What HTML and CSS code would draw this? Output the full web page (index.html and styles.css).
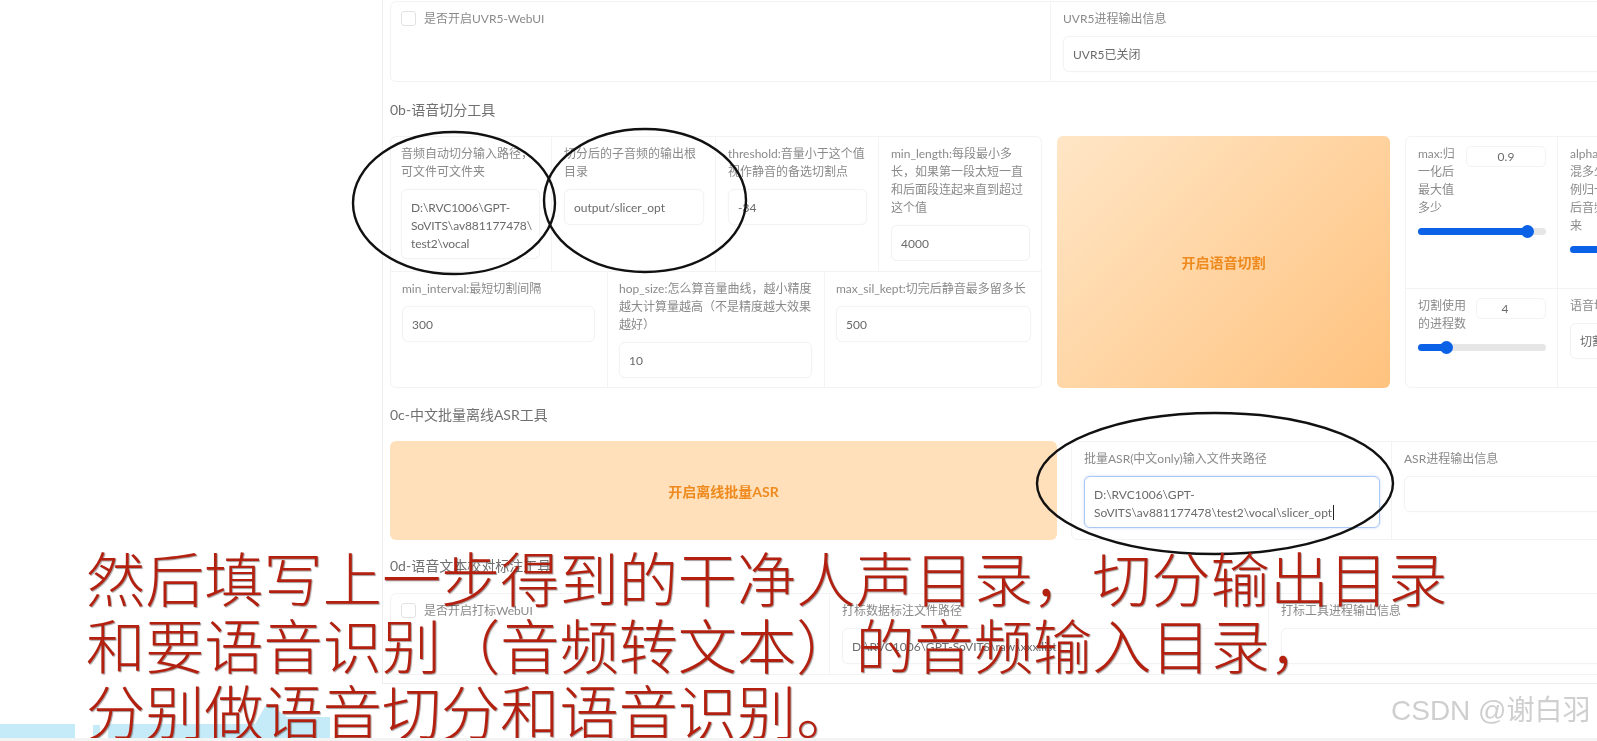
FILE: index.html
```html
<!DOCTYPE html>
<html lang="zh-CN">
<head>
<meta charset="utf-8">
<title>GPT-SoVITS WebUI</title>
<link rel="stylesheet" href="styles.css">
</head>
<body>
<div class="stage">
  <main class="panel">
    <section class="box row-a">
      <div class="cell w-660 check-cell"><span class="check"></span><span class="label">是否开启UVR5-WebUI</span></div>
      <div class="cell fill-cell"><div class="label gap">UVR5进程输出信息</div><div class="field">UVR5已关闭</div></div>
    </section>

    <h2 class="heading h-b">0b-语音切分工具</h2>
    <section class="row-b">
      <div class="box grid">
        <div class="grid-top">
          <div class="cell"><div class="label gap">音频自动切分输入路径，可文件可文件夹</div><div class="field multi tight">D:\RVC1006\GPT-SoVITS\av881177478\test2\vocal</div></div>
          <div class="cell"><div class="label gap">切分后的子音频的输出根目录</div><div class="field">output/slicer_opt</div></div>
          <div class="cell"><div class="label gap">threshold:音量小于这个值视作静音的备选切割点</div><div class="field">-34</div></div>
          <div class="cell"><div class="label gap">min_length:每段最小多长，如果第一段太短一直和后面段连起来直到超过这个值</div><div class="field">4000</div></div>
        </div>
        <div class="grid-bottom">
          <div class="cell"><div class="label gap">min_interval:最短切割间隔</div><div class="field">300</div></div>
          <div class="cell"><div class="label gap">hop_size:怎么算音量曲线，越小精度越大计算量越高（不是精度越大效果越好）</div><div class="field">10</div></div>
          <div class="cell"><div class="label gap">max_sil_kept:切完后静音最多留多长</div><div class="field">500</div></div>
        </div>
      </div>
      <button class="action action-big">开启语音切割</button>
      <div class="box side">
        <div class="side-row side-top">
          <div class="cell side-cell">
            <div class="slide-head"><div class="label">max:归<br>一化后<br>最大值<br>多少</div><div class="num num-wide">0.9</div></div>
            <div class="slider"><div class="slider-fill" style="width:86%"></div></div>
          </div>
          <div class="cell side-cell">
            <div class="slide-head"><div class="label">alpha_mix:<br>混多少比<br>例归一化<br>后音频进<br>来</div></div>
            <div class="slider"><div class="slider-fill" style="width:80%"></div></div>
          </div>
        </div>
        <div class="side-row side-bottom">
          <div class="cell side-cell">
            <div class="slide-head"><div class="label">切割使用<br>的进程数</div><div class="num num-narrow">4</div></div>
            <div class="slider"><div class="slider-fill" style="width:23%"></div></div>
          </div>
          <div class="cell side-cell">
            <div class="label nowrap">语音切割进程输出信息</div>
            <div class="field nowrap side-field">切割已完成</div>
          </div>
        </div>
      </div>
    </section>

    <h2 class="heading h-c">0c-中文批量离线ASR工具</h2>
    <section class="row-c">
      <button class="action action-wide">开启离线批量ASR</button>
      <div class="box asr">
        <div class="cell w-320"><div class="label gap">批量ASR(中文only)输入文件夹路径</div><div class="field multi focus">D:\RVC1006\GPT-SoVITS\av881177478\test2\vocal\slicer_opt<span class="caret"></span></div></div>
        <div class="cell fill-cell"><div class="label gap">ASR进程输出信息</div><div class="field empty"></div></div>
      </div>
    </section>

    <h2 class="heading h-d">0d-语音文本校对标注工具</h2>
    <section class="box row-d">
      <div class="cell w-441 check-cell"><span class="check"></span><span class="label">是否开启打标WebUI</span></div>
      <div class="cell w-439"><div class="label gap">打标数据标注文件路径</div><div class="field nowrap">D:\RVC1006\GPT-SoVITS\raw\xxx.list</div></div>
      <div class="cell fill-cell"><div class="label gap">打标工具进程输出信息</div><div class="field empty"></div></div>
    </section>
  </main>

  <svg class="blobs" viewBox="0 0 1597 741" aria-hidden="true">
    <path d="M0 724H75V738H0Z M93 725H100V738H93Z M108 724H255L267 703L287 717H330V738H108Z"/>
  </svg>
  <svg class="rings" viewBox="0 0 1597 741" aria-hidden="true">
    <ellipse cx="454" cy="203" rx="101" ry="71"/>
    <ellipse cx="645" cy="200.5" rx="101" ry="71.5"/>
    <ellipse cx="1215" cy="483.5" rx="178" ry="70.5"/>
  </svg>
  <div class="caption">然后填写上一步得到的干净人声目录，切分输出目录<br>和要语音识别（音频转文本）的音频输入目录，<br>分别做语音切分和语音识别。</div>
  <div class="mark">CSDN @谢白羽</div>
  <div class="band"></div>
</div>
</body>
</html>
```

FILE: styles.css
```css
* { box-sizing: border-box; }
html, body { margin: 0; padding: 0; background: #fff; }
body { width: 1597px; height: 741px; overflow: hidden; font-family: Lato, "Noto Sans CJK SC", "Noto Sans", sans-serif; }

.stage { position: relative; width: 1597px; height: 741px; overflow: hidden; background: #fff; filter: blur(.55px); }

.panel { margin-left: 382px; width: 1400px; height: 684px; padding: 1px 0 0 7px; border-left: 1px solid #ededed; border-bottom: 1px solid #ededed; }

.box { border: 1px solid #f3f3f3; border-radius: 6px; background: #fff; }
.cell { padding: 8px 11px 8px 12px; border-right: 1px solid #f3f3f3; min-width: 0; }
.fill-cell { flex: 1; border-right: 0; }
.w-660 { width: 660px; }
.w-441 { width: 439px; }
.w-439 { width: 439px; }
.w-320 { width: 320px; }

.label { font-size: 12px; line-height: 18px; color: #8a8a8a; }
.gap { margin-bottom: 8px; }
.nowrap { white-space: nowrap; }

.field { border: 1px solid #f3f3f3; border-radius: 6px; padding: 9px 9px 7px; min-height: 36px; font-size: 12px; line-height: 18px; color: #6a6a6a; background: #fff; box-shadow: 0 0 2px rgba(0,0,0,.03); overflow-wrap: anywhere; }
.multi { padding-bottom: 5px; }
.tight { padding-right: 3px; letter-spacing: -.1px; }
.empty { height: 36px; }
.focus { border-color: #a9c8f2; box-shadow: 0 0 3px rgba(90,150,240,.35); }
.caret { display: inline-block; width: 1px; height: 15px; margin-left: 1px; background: #222; vertical-align: -3px; }

.check-cell { display: flex; align-items: flex-start; gap: 8px; padding-left: 10px; }
.check { width: 15px; height: 15px; margin-top: 1px; border: 1px solid #e2e2e2; border-radius: 3px; background: #fff; flex: none; }

.heading { margin: 0; font-size: 14px; line-height: 20px; font-weight: 400; color: #707070; }
.h-b { margin-top: 18px; margin-bottom: 16px; }
.h-c { margin-top: 17px; margin-bottom: 16px; }
.h-d { margin-top: 16px; margin-bottom: 17px; }

.row-a { display: flex; height: 81px; }
.row-b { display: flex; gap: 15px; height: 252px; }
.row-c { display: flex; gap: 14px; height: 99px; }
.row-d { display: flex; height: 82px; }

.grid { width: 652px; flex: none; }
.grid-top { display: grid; grid-template-columns: 161px 164px 163px 162px; height: 134px; }
.grid-top .cell:first-child { padding-left: 10px; }
.grid-top .cell:last-child, .grid-bottom .cell:last-child { border-right: 0; }
.grid-bottom { display: grid; grid-template-columns: 217px 217px 216px; height: 116px; border-top: 1px solid #f3f3f3; }
.grid-bottom .cell { padding-left: 11px; padding-right: 12px; }
.grid-bottom .cell:last-child { padding-right: 10px; }

.action { border: 0; border-radius: 6px; font-family: inherit; font-size: 14px; font-weight: 700; color: #ee8a1e; padding: 0; flex: none; }
.action-big { width: 333px; background: linear-gradient(135deg, #ffe6c6, #ffc27e); }
.action-wide { width: 667px; background: #ffe0ba; }

.side { width: 315px; flex: none; display: flex; flex-direction: column; }
.side-row { display: grid; grid-template-columns: 152px 1fr; }
.side-top { height: 152px; border-bottom: 1px solid #f3f3f3; }
.side-bottom { flex: 1; }
.side-cell { padding: 8px 11px 8px 12px; }
.side-cell:last-child { border-right: 0; }
.slide-head { display: flex; justify-content: space-between; align-items: flex-start; }
.num { margin-top: 1px; height: 21px; border: 1px solid #f3f3f3; border-radius: 5px; font-size: 12px; line-height: 19px; color: #6a6a6a; text-align: center; }
.num-wide { width: 80px; }
.num-narrow { width: 70px; padding-right: 12px; }
.slider { position: relative; height: 7px; margin-top: 11px; border-radius: 4px; background: #e6e6e6; }
.slider-fill { position: relative; height: 100%; border-radius: 4px; background: #0b62e6; }
.slider-fill::after { content: ""; position: absolute; right: -6px; top: -3px; width: 13px; height: 13px; border-radius: 50%; background: #0b62e6; }
.side-field { margin-top: 8px; width: 140px; }

.asr { flex: 1; display: flex; }

.blobs, .rings { position: absolute; left: 0; top: 0; width: 1597px; height: 741px; pointer-events: none; }
.blobs path { fill: #c6ebf8; }
.rings ellipse { fill: none; stroke: #111; stroke-width: 2.4; }

.caption { position: absolute; left: 86px; top: 543px; font-family: "Noto Sans CJK SC", sans-serif; font-size: 59.2px; line-height: 66.5px; font-weight: 300; color: #b3200f; text-shadow: 1px 1px 1px rgba(50,30,30,.45); white-space: nowrap; }
.mark { position: absolute; left: 1391px; top: 691px; font-family: "Liberation Sans", "Noto Sans CJK SC", sans-serif; font-size: 28px; line-height: 40px; color: #cfcfcf; white-space: nowrap; }
.band { position: absolute; left: 0; right: 0; bottom: 0; height: 3px; background: #f3f3f3; }
```
